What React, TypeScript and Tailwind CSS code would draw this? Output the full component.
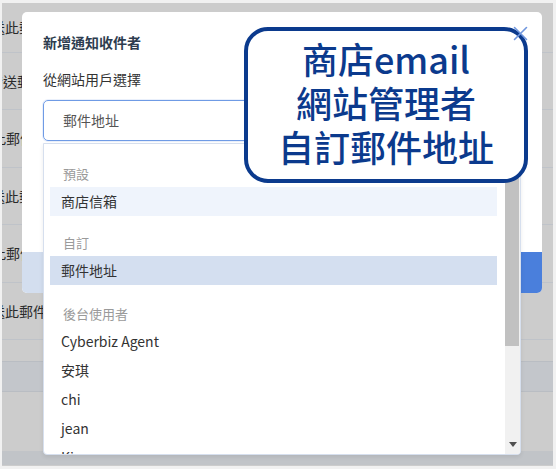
import React from 'react'

const FONT = "font-['Noto_Sans_CJK_TC','Noto_Sans',sans-serif]"

// 背景頁面的表格列（被遮罩蓋住，只露出左邊一點）
const BG_ROWS = [
  { h: 'h-[50px]', text: '發送此郵件', ml: '-ml-[25px]' },
  { h: 'h-[57px]', text: '發送郵件', ml: '-ml-[13px]' },
  { h: 'h-[58px]', text: '此郵件', ml: '-ml-[10px]' },
  { h: 'h-[57px]', text: '發送此郵件', ml: '-ml-[25px]' },
  { h: 'h-[58px]', text: '此郵件', ml: '-ml-[10px]' },
  { h: 'h-[57px]', text: '發送此郵件', ml: '-ml-[25px]' },
]

const USERS = ['Cyberbiz Agent', '安琪', 'chi', 'jean', 'Kim']

function GroupLabel({ children, tall }: { children: React.ReactNode; tall?: boolean }) {
  return (
    <div
      className={`${tall ? 'h-[42px]' : 'h-[40px]'} flex items-end pb-[4px] pl-[13px] text-[13px] leading-[18px] text-[#9a9a9a]`}
    >
      {children}
    </div>
  )
}

function Item({ children, tone }: { children: React.ReactNode; tone?: 'hover' | 'active' }) {
  return (
    <div
      className={`h-[29px] flex items-center pl-[11px] text-[14px] text-[#333] ${
        tone === 'active' ? 'bg-[#d4dff0]' : tone === 'hover' ? 'bg-[#eff4fc]' : ''
      }`}
    >
      {children}
    </div>
  )
}

export default function App() {
  return (
    <div className={`w-[556px] h-[469px] bg-[#f1f1f1] pt-[3px] pl-[2px] pr-[3px] pb-[3px] ${FONT}`}>
      <div className="relative w-full h-full bg-[#cccccc] overflow-hidden">
        {/* page behind the overlay */}
        <div className="flex flex-col">
          {BG_ROWS.map((r, i) => (
            <div key={i} className={`${r.h} border-b border-[#bfc3c9] flex items-center`}>
              <span className={`${r.ml} text-[14px] text-[#2a2a2a] whitespace-nowrap`}>{r.text}</span>
            </div>
          ))}
          <div className="h-[21px]" />
          <div className="h-[31px] bg-[#c3c6cb] border-y border-[#b9bdc3]" />
          <div className="h-[59px]" />
          <div className="h-[14px] bg-[#c1c4c8]" />
        </div>

        {/* modal */}
        <div className="absolute left-[20px] top-[9px] w-[520px] h-[281px] bg-white rounded-[5px] overflow-hidden flex flex-col">
          <div className="px-[21px] pt-[20px] flex-1">
            <h2 className="text-[14px] leading-[20px] font-bold text-[#2e3d4f]">新增通知收件者</h2>
            <p className="mt-[17px] text-[14px] leading-[20px] text-[#333]">從網站用戶選擇</p>
            <div className="mt-[11px] h-[41px] rounded-[5px] border border-[#6f9be5] shadow-[0_0_0_1px_rgba(111,155,229,0.15)] flex items-center pl-[19px] text-[14px] text-[#555]">
              郵件地址
            </div>
          </div>
          <div className="h-[41px] flex">
            <div className="flex-1 bg-[#d3deef]" />
            <div className="flex-1 bg-[#4a7fdc]" />
          </div>
        </div>

        {/* dropdown menu */}
        <div className="absolute left-[41px] top-[140px] w-[478px] h-[312px] bg-white border border-[#d6dfee] rounded-b-[4px] shadow-[0_2px_4px_rgba(0,0,0,0.08)] flex overflow-hidden">
          <div className="flex-1 pl-[6px] pr-[8px] pt-[3px] overflow-hidden">
            <GroupLabel>預設</GroupLabel>
            <Item tone="hover">商店信箱</Item>
            <GroupLabel>自訂</GroupLabel>
            <Item tone="active">郵件地址</Item>
            <GroupLabel tall>後台使用者</GroupLabel>
            {USERS.map((u) => (
              <Item key={u}>{u}</Item>
            ))}
          </div>
          <div className="w-[15px] bg-[#f1f1f1] flex flex-col">
            <div className="h-[202px] mr-[1px] bg-[#c1c1c1]" />
            <div className="flex-1" />
            <div className="h-[16px] flex items-center justify-center mb-[2px]">
              <svg width="8" height="5" viewBox="0 0 8 5">
                <path d="M0 0h8L4 5z" fill="#505050" />
              </svg>
            </div>
          </div>
        </div>

        {/* annotation callout */}
        <div className="absolute left-[242px] top-[24px] w-[284px] h-[156px] bg-white border-[4px] border-[#0b3a8d] rounded-[24px] flex flex-col items-center justify-center text-[36px] leading-[44px] font-medium text-[#0b3a8d] pb-[6px]">
          <div>商店email</div>
          <div>網站管理者</div>
          <div>自訂郵件地址</div>
        </div>

        {/* modal close button, sits above the callout */}
        <button
          className="absolute left-[510px] top-[22px] w-[16px] h-[16px] flex items-center justify-center"
          aria-label="close"
        >
          <svg width="15" height="15" viewBox="0 0 15 15" fill="none" stroke="#6f96de" strokeWidth="1.6" strokeLinecap="round">
            <path d="M1.5 1.5 13.5 13.5M13.5 1.5 1.5 13.5" />
          </svg>
        </button>
      </div>
    </div>
  )
}
